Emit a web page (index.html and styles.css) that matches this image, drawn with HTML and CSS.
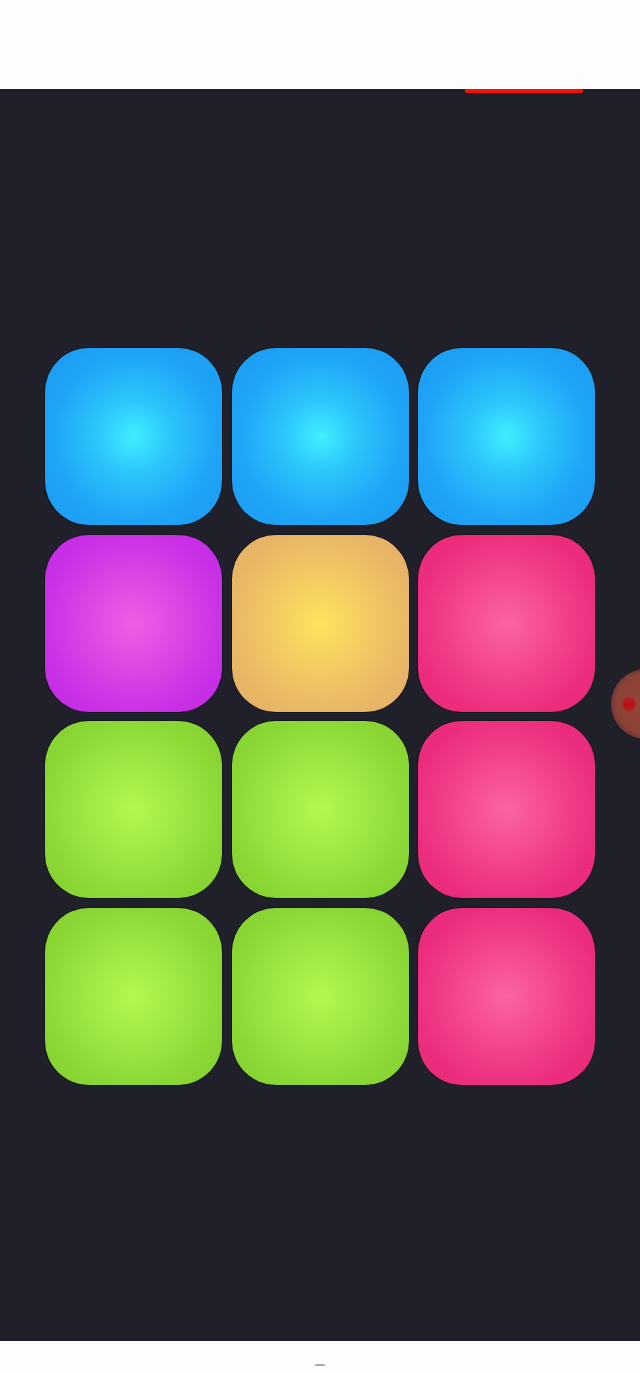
FILE: index.html
```html
<!DOCTYPE html>
<html>
<head>
<meta charset="utf-8">
<link rel="stylesheet" href="styles.css">
</head>
<body>
<div class="topbar"></div>
<main class="stage">
  <div class="progress-row"><div class="progress"></div></div>
  <div class="grid">
    <div class="pad blue"></div>
    <div class="pad blue"></div>
    <div class="pad blue"></div>
    <div class="pad purple"></div>
    <div class="pad orange"></div>
    <div class="pad pink"></div>
    <div class="pad green"></div>
    <div class="pad green"></div>
    <div class="pad pink"></div>
    <div class="pad green"></div>
    <div class="pad green"></div>
    <div class="pad pink"></div>
  </div>
  <div class="touch"><div class="touch-dot"></div></div>
</main>
<div class="bottombar"><div class="home"></div></div>
</body>
</html>
```
FILE: styles.css
```css
html, body { margin: 0; padding: 0; }
body {
  width: 640px;
  height: 1373px;
  background: #fdfdfd;
  font-family: "Liberation Sans", Arial, sans-serif;
  display: flex;
  flex-direction: column;
  overflow: hidden;
}
.topbar { height: 89px; background: #fdfdfe; flex: none; }
.stage {
  position: relative;
  height: 1252px;
  flex: none;
  background: #1f2029;
  overflow: hidden;
}
.progress-row { display: flex; justify-content: flex-end; padding-right: 57px; }
.progress { width: 118px; height: 4px; background: #f2140c; border-radius: 0 0 2px 2px; }
.grid {
  margin-top: 255px;
  margin-left: 45px;
  width: 550px;
  display: grid;
  grid-template-columns: repeat(3, 177px);
  grid-auto-rows: 177px;
  column-gap: 9.5px;
  row-gap: 9.5px;
}
.pad {
  border-radius: 44px;
  box-shadow: 0 0 0 1px rgba(0,0,0,0.25);
}
.blue { background: radial-gradient(circle at 50% 50%, #40effe 0%, #2cc4fb 30%, #1ea5f6 65%, #1b9af3 100%); }
.purple { background: radial-gradient(circle at 50% 50%, #ee5ee2 0%, #dc48e4 35%, #c830e6 75%, #c22ce4 100%); }
.orange { background: radial-gradient(circle at 50% 50%, #fde45e 0%, #f3cc62 35%, #e8b565 75%, #e5ae65 100%); }
.pink { background: radial-gradient(circle at 50% 50%, #fb63a2 0%, #f44990 35%, #ec2d7e 75%, #e9287a 100%); }
.green { background: radial-gradient(circle at 50% 50%, #b2f84e 0%, #9ee944 35%, #89d634 75%, #83d02f 100%); }
.touch {
  position: absolute;
  left: 611px;
  top: 580px;
  width: 70px;
  height: 70px;
  border-radius: 50%;
  background: radial-gradient(circle, rgba(158,70,56,0.95) 0%, rgba(150,70,56,0.9) 60%, rgba(130,60,50,0.45) 88%, rgba(31,32,41,0) 100%);
}
.touch-dot {
  position: absolute;
  left: 11px;
  top: 28px;
  width: 14px; height: 14px; border-radius: 50%;
  background: radial-gradient(circle, #b8141a 45%, rgba(176,24,24,0) 100%);
}
.bottombar { flex: 1; background: #fdfdfd; display: flex; justify-content: center; align-items: flex-start; padding-top: 23px; }
.home { width: 10px; height: 2px; background: #aaa; border-radius: 1px; }
```
